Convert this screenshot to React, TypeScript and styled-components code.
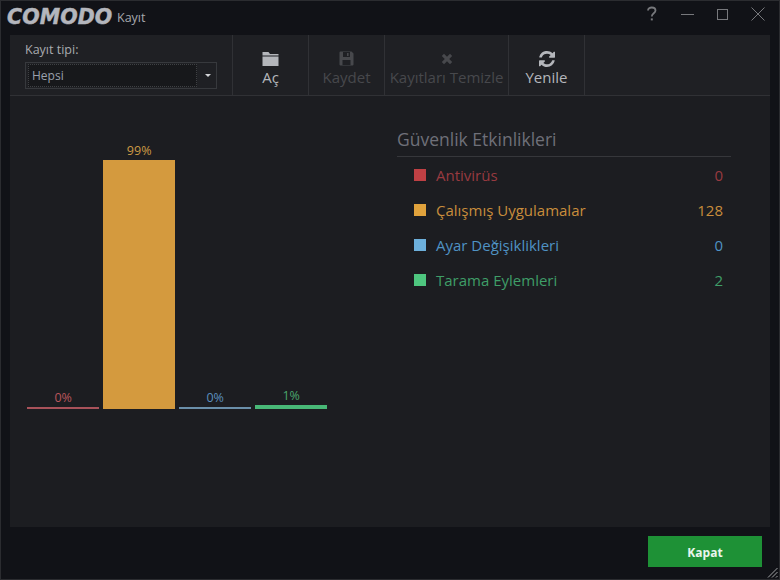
import React from "react";
import styled, { createGlobalStyle } from "styled-components";

const Global = createGlobalStyle`
  html, body { margin: 0; padding: 0; background: #121318; }
  #root { width: 780px; height: 580px; }
  * { box-sizing: border-box; }
`;

const Win = styled.div`
  width: 780px; height: 580px; background: #111217; border: 1px solid #2b2c30;
  display: flex; flex-direction: column; font-family: "Open Sans", "Noto Sans", sans-serif; overflow: hidden;
`;
const Title = styled.div`
  height: 34px; flex: none; display: flex; align-items: center; padding: 0 0 0 6px;
`;
const Logo = styled.span`
  font-family: "DejaVu Sans", sans-serif; font-weight: 700; font-style: italic; font-size: 20.5px;
  color: #b4b6bd; -webkit-text-stroke: 0.5px #b4b6bd; letter-spacing: 0.1px; line-height: 1;
  display: inline-block; width: 110px; margin-top: -1px;
`;
const TitleText = styled.span`
  color: #a6a8ad; font-size: 12.5px; margin-top: -1px;
`;
const WinBtns = styled.div`
  margin-left: auto; display: flex; align-items: center; height: 100%; padding-right: 14px; margin-top: -8px; gap: 23px;
`;
const Ico = styled.svg`
  display: block; flex: none;
`;
const Panel = styled.div`
  flex: 1; margin: 0 9px; background: #1c1d21; display: flex; flex-direction: column; min-height: 0;
`;
const Toolbar = styled.div`
  height: 61px; flex: none; display: flex; background: #1f2024; border-bottom: 1px solid #303135; padding-left: 0;
`;
const TypeBox = styled.div`
  width: 223px; flex: none; border-right: 1px solid #303135; padding: 7px 0 0 15px;
`;
const TypeLabel = styled.div`
  font-size: 12.5px; line-height: 16px; color: #a9abaf;
`;
const Select = styled.div`
  margin-top: 4px; width: 192px; height: 27px; border: 1px solid #37393d; display: flex; align-items: center;
  padding: 1px 0 1px 2px; position: relative;
`;
const SelectInner = styled.div`
  width: 169px; height: 23px; border: 1px dotted #3f4144; background: #17181b; color: #9aa0ad;
  font-size: 12px; line-height: 22px; padding-left: 3px;
`;
const Caret = styled.div`
  position: absolute; right: 5px; top: 11px; width: 0; height: 0;
  border-left: 3.5px solid transparent; border-right: 3.5px solid transparent; border-top: 3.5px solid #d4d5d8;
`;
const Tool = styled.div<{ $w: number; $off?: boolean }>`
  width: ${p => p.$w}px; flex: none; border-right: 1px solid #303135; display: flex; flex-direction: column;
  align-items: center; padding-top: 15px; color: ${p => (p.$off ? "#47484c" : "#b4b6bb")};
`;
const ToolIcon = styled.div`
  height: 17px; display: flex; align-items: center; justify-content: center;
`;
const ToolText = styled.div`
  font-size: 15px; line-height: 20px; margin-top: 0; white-space: nowrap;
`;
const Body = styled.div`
  flex: 1; display: flex; min-height: 0;
`;
const Chart = styled.div`
  width: 387px; flex: none; padding: 0 0 118px 17px; display: flex; align-items: flex-end; gap: 3.6px;
`;
const Col = styled.div`
  width: 72.4px; flex: none; display: flex; flex-direction: column; align-items: center;
`;
const Pct = styled.div<{ $c: string }>`
  color: ${p => p.$c}; font-size: 12.5px; line-height: 16px; margin-bottom: 1px;
`;
const Bar = styled.div<{ $c: string; $h: number }>`
  width: 100%; height: ${p => p.$h}px; background: ${p => p.$c};
`;
const Legend = styled.div`
  width: 334px; flex: none; padding-top: 31px;
`;
const LegendTitle = styled.div`
  height: 30px; border-bottom: 1px solid #36373b; font-size: 17.5px; line-height: 24px; color: #6f7079;
`;
const Rows = styled.div`
  padding: 0 8px 0 17px;
`;
const Row = styled.div<{ $c: string }>`
  height: 35px; display: flex; align-items: center; color: ${p => p.$c}; font-size: 15px;
`;
const Swatch = styled.span<{ $c: string }>`
  width: 12px; height: 12px; background: ${p => p.$c}; margin-right: 10px; flex: none;
`;
const Count = styled.span`
  margin-left: auto;
`;
const Footer = styled.div`
  height: 52px; flex: none; display: flex; justify-content: flex-end; align-items: flex-start; padding: 9px 17px 0 0; position: relative;
`;
const Close = styled.div`
  width: 114px; height: 31px; background: #1e9136; color: #e9f5ec; font-size: 12px; font-weight: 700;
  display: flex; align-items: center; justify-content: center; padding-top: 1px;
`;
const Grip = styled.svg`
  position: absolute; right: 1px; bottom: 1px;
`;

const stroke = { fill: "none", stroke: "currentColor" } as const;

export default function App() {
  return (
    <Win>
      <Global />
      <Title>
        <Logo>COMODO</Logo>
        <TitleText>Kayıt</TitleText>
        <WinBtns>
          <Ico width="12" height="16" viewBox="1 0 12 16" style={{ color: "#77787c" }}>
            <path d="M3 4.500C3 2.500 4.800 1.500 6.800 1.500s3.700 1.100 3.700 3c0 2.800-3.700 2.800-3.700 6" {...stroke} strokeWidth="1.8" />
            <rect x="5.800" y="12.400" width="2" height="2" fill="currentColor" />
          </Ico>
          <Ico width="13" height="3" viewBox="0 0 13 3" style={{ color: "#77787c" }}>
            <path d="M0 1.500h13" {...stroke} />
          </Ico>
          <Ico width="11" height="11" viewBox="0 0 11 11" style={{ color: "#77787c" }}>
            <rect x="0.500" y="0.500" width="10" height="10" {...stroke} />
          </Ico>
          <Ico width="14" height="14" viewBox="0 0 14 14" style={{ color: "#77787c" }}>
            <path d="M0.500 0.500l13 13M13.500 0.500l-13 13" {...stroke} />
          </Ico>
        </WinBtns>
      </Title>
      <Panel>
        <Toolbar>
          <TypeBox>
            <TypeLabel>Kayıt tipi:</TypeLabel>
            <Select>
              <SelectInner>Hepsi</SelectInner>
              <Caret />
            </Select>
          </TypeBox>
          <Tool $w={76}>
            <ToolIcon>
              <Ico width="17" height="15" viewBox="0 0 17 15">
                <path d="M0.500 1h6l1.500 2h8.500v1.500h-16zM0.500 5.500h16V15h-16z" fill="currentColor" />
              </Ico>
            </ToolIcon>
            <ToolText>Aç</ToolText>
          </Tool>
          <Tool $w={76} $off>
            <ToolIcon>
              <Ico width="15" height="15" viewBox="0 0 15 15">
                <path fillRule="evenodd" d="M1.500 0.500h11l2 2v11a1 1 0 0 1-1 1h-12a1 1 0 0 1-1-1v-12a1 1 0 0 1 1-1zM4 1v5h7V1zM8 2h1.600v3H8zM3.500 9v5h8V9z" fill="currentColor" />
              </Ico>
            </ToolIcon>
            <ToolText>Kaydet</ToolText>
          </Tool>
          <Tool $w={124} $off>
            <ToolIcon>
              <Ico width="12" height="12" viewBox="0 0 12 12">
                <path d="M3 0.800L6 3.800l3-3L11.200 3 8.200 6l3 3L9 11.200l-3-3-3 3L0.800 9l3-3-3-3z" fill="currentColor" />
              </Ico>
            </ToolIcon>
            <ToolText>Kayıtları Temizle</ToolText>
          </Tool>
          <Tool $w={76}>
            <ToolIcon>
              <Ico width="16" height="16" viewBox="0 0 1536 1536">
                <path d="M1511 928q0 5-1 7-64 268-268 434.500T764 1536q-146 0-282.500-55T238 1324l-129 129q-19 19-45 19t-45-19-19-45V960q0-26 19-45t45-19h448q26 0 45 19t19 45-19 45L420 1142q71 66 161 102t187 36q134 0 250-65t186-179q11-17 53-117 8-23 30-23h192q13 0 22.500 9.500t9.500 22.500zM1536 128v448q0 26-19 45t-45 19h-448q-26 0-45-19t-19-45 19-45l138-138q-148-137-349-137-134 0-250 65T332 480q-11 17-53 117-8 23-30 23H50q-13 0-22.500-9.500T18 588v-7q65-268 270-434.500T768 0q146 0 284 55.500T1297 212l130-129q19-19 45-19t45 19 19 45z" fill="currentColor" />
              </Ico>
            </ToolIcon>
            <ToolText>Yenile</ToolText>
          </Tool>
        </Toolbar>
        <Body>
          <Chart>
            <Col>
              <Pct $c="#b9555c">0%</Pct>
              <Bar $c="#a8525a" $h={2} />
            </Col>
            <Col>
              <Pct $c="#cc9a45">99%</Pct>
              <Bar $c="#d49a3e" $h={249} />
            </Col>
            <Col>
              <Pct $c="#5b8fbf">0%</Pct>
              <Bar $c="#6a8faa" $h={2} />
            </Col>
            <Col>
              <Pct $c="#4aa56d">1%</Pct>
              <Bar $c="#48b877" $h={4} />
            </Col>
          </Chart>
          <Legend>
            <LegendTitle>Güvenlik Etkinlikleri</LegendTitle>
            <Rows>
              <Row $c="#983a40"><Swatch $c="#bf4044" />Antivirüs<Count>0</Count></Row>
              <Row $c="#c98d3c"><Swatch $c="#e0a23c" />Çalışmış Uygulamalar<Count>128</Count></Row>
              <Row $c="#4f92c4"><Swatch $c="#6db0dc" />Ayar Değişiklikleri<Count>0</Count></Row>
              <Row $c="#3f9e68"><Swatch $c="#4ec67f" />Tarama Eylemleri<Count>2</Count></Row>
            </Rows>
          </Legend>
        </Body>
      </Panel>
      <Footer>
        <Close>Kapat</Close>
        <Grip width="11" height="11" viewBox="0 0 11 11">
          <path d="M10.500 1L1 10.500M10.500 5L5 10.500M10.500 9L9 10.500" fill="none" stroke="#a0a1a4" />
        </Grip>
      </Footer>
    </Win>
  );
}
